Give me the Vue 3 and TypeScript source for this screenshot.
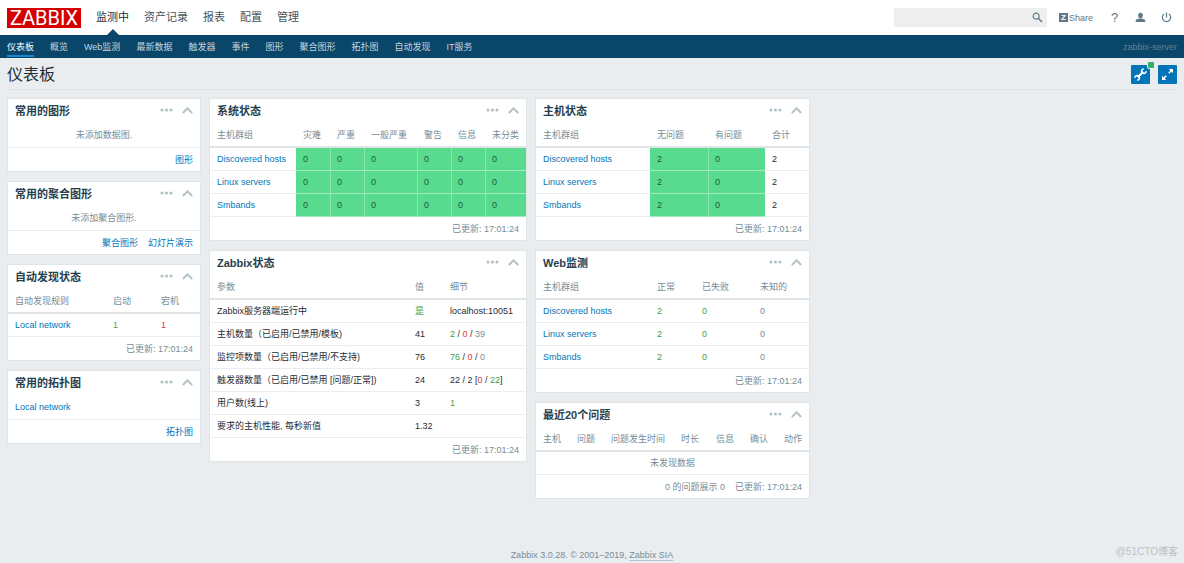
<script setup lang="ts">
interface Part {
  text: string
  tone?: 'ok' | 'bad' | 'muted' | 'olive'
}
interface Cell {
  parts: Part[]
  link?: boolean
  fill?: boolean
}
interface Column {
  label: string
  weight: number
}
interface Widget {
  title: string
  columns?: Column[]
  rows?: Cell[][]
  message?: string
  link?: string
  footLinks?: string[]
  footTexts?: string[]
}

const updated = '已更新: 17:01:24'
const groups = ['Discovered hosts', 'Linux servers', 'Smbands']

const text = (value: string, tone?: Part['tone']): Cell => ({ parts: [{ text: value, tone }] })
const anchor = (value: string): Cell => ({ parts: [{ text: value }], link: true })
const filled = (value: string): Cell => ({ parts: [{ text: value }], fill: true })
const cols = (...items: [string, number][]): Column[] =>
  items.map(([label, weight]) => ({ label, weight }))

const columns: Widget[][] = [
  [
    { title: '常用的图形', message: '未添加数据图.', footLinks: ['图形'] },
    { title: '常用的聚合图形', message: '未添加聚合图形.', footLinks: ['聚合图形', '幻灯片演示'] },
    {
      title: '自动发现状态',
      columns: cols(['自动发现规则', 98], ['启动', 48], ['宕机', 46]),
      rows: [[anchor('Local network'), text('1', 'olive'), text('1', 'bad')]],
      footTexts: [updated],
    },
    { title: '常用的拓扑图', link: 'Local network', footLinks: ['拓扑图'] },
  ],
  [
    {
      title: '系统状态',
      columns: cols(['主机群组', 86], ['灾难', 34], ['严重', 34], ['一般严重', 53], ['警告', 34], ['信息', 34], ['未分类', 41]),
      rows: groups.map((g) => [anchor(g), ...Array.from({ length: 6 }, () => filled('0'))]),
      footTexts: [updated],
    },
    {
      title: 'Zabbix状态',
      columns: cols(['参数', 198], ['值', 35], ['细节', 83]),
      rows: [
        [text('Zabbix服务器端运行中'), text('是', 'ok'), text('localhost:10051')],
        [
          text('主机数量（已启用/已禁用/模板)'),
          text('41'),
          { parts: [{ text: '2', tone: 'ok' }, { text: ' / ' }, { text: '0', tone: 'bad' }, { text: ' / ' }, { text: '39', tone: 'muted' }] },
        ],
        [
          text('监控项数量（已启用/已禁用/不支持)'),
          text('76'),
          { parts: [{ text: '76', tone: 'ok' }, { text: ' / ' }, { text: '0', tone: 'bad' }, { text: ' / ' }, { text: '0', tone: 'muted' }] },
        ],
        [
          text('触发器数量（已启用/已禁用 [问题/正常])'),
          text('24'),
          { parts: [{ text: '22 / 2 [' }, { text: '0', tone: 'bad' }, { text: ' / ' }, { text: '22', tone: 'ok' }, { text: ']' }] },
        ],
        [text('用户数(线上)'), text('3'), text('1', 'ok')],
        [text('要求的主机性能, 每秒新值'), text('1.32'), text('')],
      ],
      footTexts: [updated],
    },
  ],
  [
    {
      title: '主机状态',
      columns: cols(['主机群组', 114], ['无问题', 58], ['有问题', 57], ['合计', 44]),
      rows: groups.map((g) => [anchor(g), filled('2'), filled('0'), text('2')]),
      footTexts: [updated],
    },
    {
      title: 'Web监测',
      columns: cols(['主机群组', 114], ['正常', 45], ['已失败', 58], ['未知的', 56]),
      rows: groups.map((g) => [anchor(g), text('2', 'ok'), text('0', 'ok'), text('0', 'muted')]),
      footTexts: [updated],
    },
    {
      title: '最近20个问题',
      columns: cols(['主机', 34], ['问题', 34], ['问题发生时间', 70], ['时长', 35], ['信息', 34], ['确认', 34], ['动作', 32]),
      rows: [],
      message: '未发现数据',
      footTexts: ['0 的问题展示 0', updated],
    },
  ],
]

const mainMenu = ['监测中', '资产记录', '报表', '配置', '管理']
const subMenu = ['仪表板', '概览', 'Web监测', '最新数据', '触发器', '事件', '图形', '聚合图形', '拓扑图', '自动发现', 'IT服务']

const share = (list: Column[], weight: number): string =>
  `${(weight / list.reduce((sum, c) => sum + c.weight, 0)) * 100}%`
</script>

<template>
  <div class="page">
    <header class="top">
      <a href="#" class="logo">ZABBIX</a>
      <nav class="main-menu">
        <a v-for="(item, i) in mainMenu" :key="item" href="#" :class="{ active: i === 0 }">{{ item }}</a>
      </nav>
      <form class="search" @submit.prevent>
        <input type="text" aria-label="搜索" />
        <button type="submit" aria-label="搜索">
          <svg width="11" height="11" viewBox="0 0 11 11" fill="none" stroke="#5f7987">
            <circle cx="4.2" cy="4.2" r="3" stroke-width="1.2" />
            <path d="M6.5 6.5 10 10" stroke-width="1.5" />
          </svg>
        </button>
      </form>
      <div class="tools">
        <a href="#" class="share"><span class="z">Z</span>Share</a>
        <a href="#" class="tool help" aria-label="帮助">?</a>
        <a href="#" class="tool" aria-label="用户">
          <svg width="11" height="11" viewBox="0 0 11 11" fill="#5f7987">
            <ellipse cx="5.5" cy="3.5" rx="2.3" ry="2.7" />
            <path d="M.7 10V8.7C.7 7.5 3 7 4.3 6.6h2.4C8 7 10.3 7.5 10.3 8.7V10z" />
          </svg>
        </a>
        <a href="#" class="tool" aria-label="退出">
          <svg width="11" height="11" viewBox="0 0 11 11" fill="none" stroke="#5f7987" stroke-width="1.2">
            <path d="M3.2 1.9A4.2 4.2 0 1 0 7.8 1.900M5.5.6V5.5" />
          </svg>
        </a>
      </div>
    </header>

    <nav class="sub-menu">
      <a v-for="(item, i) in subMenu" :key="item" href="#" :class="{ active: i === 0 }">{{ item }}</a>
      <span class="server">zabbix-server</span>
    </nav>

    <main>
      <div class="heading">
        <h1>仪表板</h1>
        <button type="button" class="action" aria-label="设置">
          <svg width="13" height="13" viewBox="0 0 13 13" fill="none" stroke="#fff">
            <path d="M3.8 9.2 9.2 3.8" stroke-width="2.2" />
            <path d="M9.9.9A2.300 2.300 0 1 0 12.100 3.100M3.100 12.100A2.300 2.300 0 1 0 .9 9.900" stroke-width="1.500" />
          </svg>
          <span class="badge"></span>
        </button>
        <button type="button" class="action" aria-label="全屏">
          <svg width="13" height="13" viewBox="0 0 13 13" fill="#fff" stroke="#fff" stroke-width="1.5">
            <path d="M7.7 5.300 10 3M5.300 7.700 3 10" />
            <path d="M7.8 1H12v4.200zM1 7.800V12h4.200z" stroke="none" />
          </svg>
        </button>
      </div>

      <div class="board">
        <div v-for="(column, c) in columns" :key="c" class="column">
          <section v-for="w in column" :key="w.title" class="widget">
            <div class="widget-head">
              <h2>{{ w.title }}</h2>
              <button type="button" aria-label="菜单">
                <svg width="13" height="4" viewBox="0 0 13 4" fill="#b3c0c7">
                  <circle cx="2" cy="2" r="1.6" />
                  <circle cx="6.5" cy="2" r="1.6" />
                  <circle cx="11" cy="2" r="1.6" />
                </svg>
              </button>
              <button type="button" aria-label="折叠">
                <svg width="11" height="7" viewBox="0 0 11 7" fill="none" stroke="#b3c0c7" stroke-width="1.8">
                  <path d="M.8 6 5.5 1.3 10.2 6" />
                </svg>
              </button>
            </div>
            <table v-if="w.columns">
              <colgroup>
                <col v-for="col in w.columns" :key="col.label" :style="{ width: share(w.columns, col.weight) }" />
              </colgroup>
              <thead>
                <tr>
                  <th v-for="col in w.columns" :key="col.label" scope="col">{{ col.label }}</th>
                </tr>
              </thead>
              <tbody>
                <tr v-for="(row, r) in w.rows" :key="r">
                  <td v-for="(cell, i) in row" :key="i" :class="{ fill: cell.fill }">
                    <a v-if="cell.link" href="#">{{ cell.parts[0].text }}</a>
                    <template v-else><span v-for="(p, n) in cell.parts" :key="n" :class="p.tone">{{ p.text }}</span></template>
                  </td>
                </tr>
                <tr v-if="w.message">
                  <td class="empty" :colspan="w.columns.length">{{ w.message }}</td>
                </tr>
              </tbody>
            </table>
            <p v-else-if="w.message" class="line message">{{ w.message }}</p>
            <p v-else class="line"><a href="#">{{ w.link }}</a></p>
            <div class="widget-foot">
              <a v-for="l in w.footLinks" :key="l" href="#">{{ l }}</a>
              <span v-for="t in w.footTexts" :key="t">{{ t }}</span>
            </div>
          </section>
        </div>
      </div>
    </main>

    <footer>Zabbix 3.0.28. © 2001–2019, <a href="#">Zabbix SIA</a></footer>
    <span class="watermark">@51CTO博客</span>
  </div>
</template>

<style>
body {
  margin: 0;
  background: #e9edf0;
}
</style>

<style scoped>
.page {
  position: relative;
  display: flex;
  flex-direction: column;
  min-height: 100vh;
  color: #1f2c33;
  font-family: "Liberation Sans", Arial, "Noto Sans CJK SC", sans-serif;
  font-size: 9px;
  line-height: 12px;
}
a {
  color: #0275b8;
  text-decoration: none;
}
button,
input {
  border: 0;
  padding: 0;
  font: inherit;
  background: none;
}
svg {
  display: block;
}
.top {
  display: flex;
  align-items: center;
  height: 35px;
  padding: 0 7px;
  background: #fff;
}
.logo {
  width: 74px;
  height: 20px;
  background: #d40000;
  color: #fff;
  font: 20px/20px Roboto, sans-serif;
  text-align: center;
}
.main-menu {
  display: flex;
  align-self: stretch;
  gap: 15px;
  margin-left: 15px;
  font-size: 11px;
  line-height: 34px;
}
.main-menu a {
  color: #47545c;
}
.main-menu .active {
  position: relative;
  color: #1f2c33;
}
.main-menu .active::after {
  content: "";
  position: absolute;
  bottom: 0;
  left: 50%;
  margin-left: -6px;
  border: 6px solid transparent;
  border-top-width: 0;
  border-bottom-color: #0a466a;
}
.search {
  display: flex;
  align-items: center;
  width: 153px;
  height: 19px;
  margin-left: auto;
  background: #eee;
}
.search input {
  flex: 1;
  min-width: 0;
  height: 19px;
  padding: 0 4px;
}
.search button {
  margin-right: 4px;
}
.tools {
  display: flex;
  align-items: center;
  margin: 0 5px 0 12px;
}
.tools a {
  color: #5f7987;
}
.share {
  display: flex;
  align-items: center;
  gap: 1px;
  margin-right: 16px;
}
.z {
  width: 9px;
  height: 9px;
  background: #5f7987;
  color: #fff;
  font-size: 8px;
  font-weight: bold;
  line-height: 9px;
  text-align: center;
}
.tool {
  display: flex;
  justify-content: center;
  width: 11px;
  margin-left: 15px;
}
.share + .tool {
  margin-left: 0;
}
.help {
  font-size: 13px;
}
.sub-menu {
  display: flex;
  gap: 16px;
  height: 23px;
  padding: 0 7px;
  background: #0a466a;
  line-height: 24px;
}
.sub-menu a {
  color: #c5d5df;
}
.sub-menu .active {
  box-sizing: border-box;
  height: 22px;
  border-bottom: 2px solid #1a87cc;
  color: #fff;
}
.server {
  margin-left: auto;
  color: #648094;
}
main {
  padding: 0 7px;
}
.heading {
  display: flex;
  align-items: center;
  gap: 8px;
  height: 29px;
  padding-top: 2px;
  margin-bottom: 8px;
  border-bottom: 1px solid #dfe4e7;
}
h1 {
  flex: 1;
  margin: 0;
  font-size: 16px;
  font-weight: normal;
  line-height: 25px;
}
.action {
  position: relative;
  display: grid;
  place-items: center;
  width: 19px;
  height: 19px;
  border-radius: 1px;
  background: #0275b8;
}
.badge {
  position: absolute;
  top: -4px;
  right: -5px;
  width: 6px;
  height: 6px;
  border: 1px solid #e9edf0;
  border-radius: 2px;
  background: #34af67;
}
.board {
  display: grid;
  grid-template-columns: 194fr 318fr 275fr 359fr;
  gap: 8px;
  align-items: start;
}
.column {
  display: grid;
  gap: 9px;
  min-width: 0;
}
.widget {
  border: 1px solid #dfe4e7;
  background: #fff;
}
.widget-head {
  display: flex;
  align-items: center;
  gap: 9px;
  height: 24px;
  padding: 0 7px;
}
h2 {
  flex: 1;
  margin: 0;
  color: #26404e;
  font-size: 11px;
  line-height: 24px;
}
.widget-head button {
  margin-bottom: 2px;
}
table {
  width: 100%;
  table-layout: fixed;
  border-collapse: separate;
  border-spacing: 0;
}
th,
td {
  box-sizing: border-box;
  padding: 0 0 0 7px;
  text-align: left;
  white-space: nowrap;
}
th {
  height: 25px;
  border-bottom: 2px solid #dfe4e7;
  color: #768d99;
  font-weight: normal;
}
td {
  height: 23px;
  border-bottom: 1px solid #ebeef0;
}
td span {
  white-space: pre;
}
td.fill {
  border-bottom-color: #a0ebbf;
  background: #59db8f;
  color: #1f5c3c;
}
td.fill + td.fill {
  border-left: 1px solid #8be6b0;
  padding-left: 6px;
}
td.empty {
  padding: 0;
  color: #768d99;
  text-align: center;
}
td .ok {
  color: #429e47;
}
td .olive {
  color: #6f9a1c;
}
td .bad {
  color: #e33734;
}
td .muted {
  color: #768d99;
}
.line {
  height: 24px;
  margin: 0;
  padding: 0 7px;
  border-bottom: 1px solid #ebeef0;
  line-height: 24px;
}
.message {
  color: #768d99;
  text-align: center;
}
.widget-foot {
  display: flex;
  justify-content: flex-end;
  gap: 10px;
  height: 23px;
  padding: 0 7px;
  color: #768d99;
  line-height: 24px;
}
footer {
  margin-top: auto;
  padding-bottom: 2px;
  color: #768d99;
  text-align: center;
}
footer a {
  border-bottom: 1px solid #b9c5cc;
  color: #768d99;
}
.watermark {
  position: absolute;
  right: 6px;
  bottom: 5px;
  color: #bcc1c4;
  font-size: 10px;
}
</style>
